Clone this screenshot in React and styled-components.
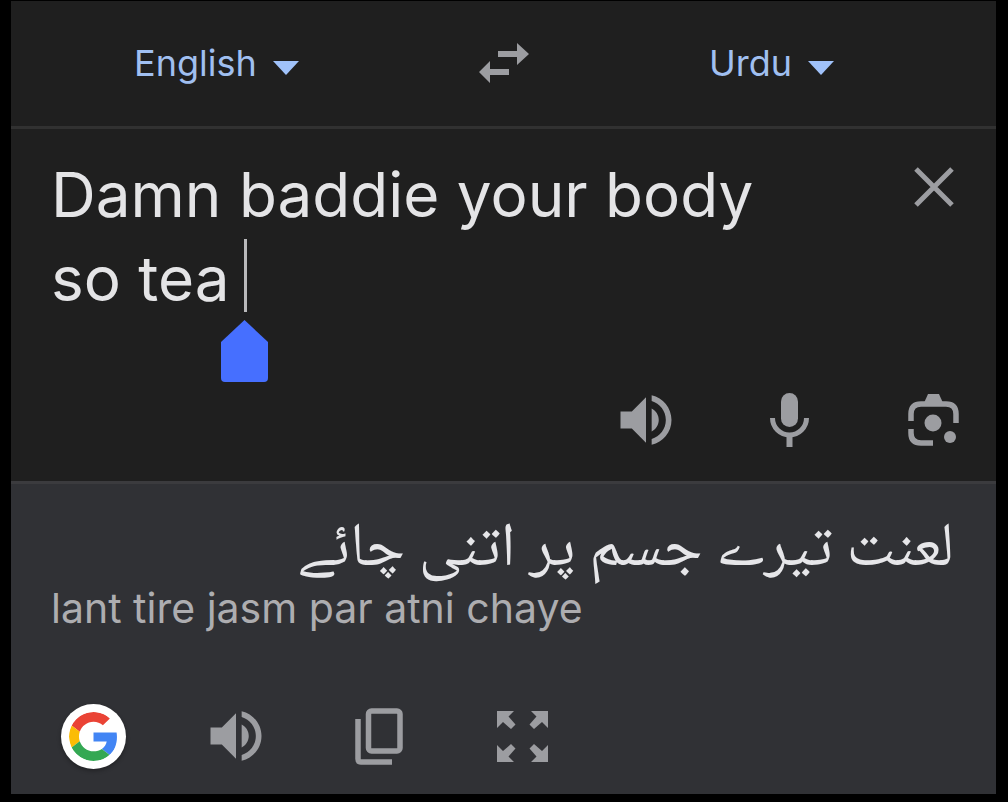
import { useState } from "react"
import styled, { createGlobalStyle } from "styled-components"

const GlobalStyle = createGlobalStyle`
  * {
    box-sizing: border-box;
  }

  body {
    margin: 0;
    background: #000;
    font-family: Inter, Roboto, sans-serif;
  }
`

const Page = styled.main`
  display: flex;
  min-height: 100vh;
  padding: 1px 12px 8px 11px;
`

const Panel = styled.div`
  display: flex;
  flex-direction: column;
  flex: 1;
  min-width: 0;
  background: #1f1f1f;
`

const LanguageBar = styled.header`
  display: flex;
  align-items: center;
  justify-content: space-between;
  height: 128px;
  padding: 0 162px 2px 123px;
  border-bottom: 3px solid #313131;
`

const Picker = styled.div`
  position: relative;
  display: flex;
  align-items: center;

  svg {
    position: absolute;
    right: 0;
    top: 22px;
    pointer-events: none;
  }
`

const LanguageSelect = styled.select`
  appearance: none;
  field-sizing: content;
  margin: 0;
  padding: 0 42px 0 0;
  border: 0;
  background: transparent;
  color: #a0bff0;
  font-family: Inter, sans-serif;
  font-size: 36px;
  line-height: 48px;
`

const IconButton = styled.button`
  display: flex;
  align-items: center;
  justify-content: center;
  flex: none;
  width: ${({ $size }) => $size || 68}px;
  height: ${({ $size }) => $size || 68}px;
  padding: 0;
  border: 0;
  background: transparent;
  color: #9c9da1;
  cursor: pointer;

  svg {
    flex: none;
  }
`

const Source = styled.section`
  display: flex;
  flex-direction: column;
  height: 352px;
  padding: 24px 28px 27px 40px;
`

const SourceRow = styled.div`
  display: flex;
  flex: 1;
  align-items: flex-start;
  justify-content: space-between;
`

const Editor = styled.div`
  position: relative;
  flex: 1;
  max-width: 760px;
`

const SourceText = styled.textarea`
  display: block;
  width: 100%;
  height: 168px;
  margin: 0;
  padding: 0;
  border: 0;
  outline: 0;
  resize: none;
  overflow: hidden;
  background: transparent;
  color: #e4e4e6;
  caret-color: transparent;
  font-family: Inter, sans-serif;
  font-size: 62px;
  line-height: 84px;
`

const Caret = styled.span`
  position: absolute;
  left: 193px;
  top: 86px;
  width: 3px;
  height: 73px;
  background: #b9b9bb;
`

const CaretHandle = styled.svg`
  position: absolute;
  left: 170px;
  top: 167px;
`

const Actions = styled.div`
  display: flex;
  justify-content: ${({ $align }) => $align || "flex-start"};
  gap: 76px;
`

const Result = styled.section`
  display: flex;
  flex-direction: column;
  justify-content: space-between;
  flex: 1;
  padding: 34px 42px 24px 40px;
  border-top: 3px solid #3b3b3e;
  background: #303135;
`

const Translation = styled.p`
  margin: 0;
  color: #e6e6e9;
  font-family: "Noto Naskh Arabic", "Noto Sans Arabic", "DejaVu Sans", sans-serif;
  font-size: 62px;
  line-height: 68px;
`

const Transliteration = styled.p`
  margin: 0;
  color: #adadb0;
  font-family: Inter, sans-serif;
  font-size: 41px;
  line-height: 44px;
`

const ResultActions = styled(Actions)`
  margin-left: 8px;
  gap: 75px;
`

const GoogleButton = styled(IconButton)`
  svg {
    padding: 8px;
    border-radius: 50%;
    background: #fff;
    box-shadow: 0 2px 4px rgba(0, 0, 0, 0.3);
  }
`

function ArrowDown() {
  return (
    <svg width="26" height="14" viewBox="0 0 26 14" fill="#a0c2fa">
      <path d="M0 0h26L13 14z" />
    </svg>
  )
}

function SwapIcon() {
  return (
    <svg width="50" height="40" viewBox="0 0 50 40" fill="currentColor">
      <path d="M19 8h19V0l12 11-12 11v-8H19zM30 26H11v-8L0 29l11 11v-8h19z" />
    </svg>
  )
}

function CloseIcon() {
  return (
    <svg width="40" height="40" viewBox="0 0 40 40" stroke="currentColor" strokeWidth="5">
      <path d="M2 2l36 36M38 2L2 38" />
    </svg>
  )
}

function SpeakerIcon() {
  return (
    <svg width="68" height="68" viewBox="0 0 24 24" fill="currentColor">
      <path d="M3 9v6h4l5 5V4L7 9H3zm13.5 3c0-1.77-1.02-3.29-2.5-4.03v8.05c1.48-.73 2.5-2.25 2.5-4.02zM14 3.23v2.06c2.89.86 5 3.54 5 6.71s-2.11 5.85-5 6.71v2.06c4.01-.91 7-4.49 7-8.77s-2.99-7.86-7-8.77z" />
    </svg>
  )
}

function MicIcon() {
  return (
    <svg width="40" height="54" viewBox="0 0 40 54" fill="none" stroke="currentColor" strokeWidth="5">
      <rect x="11" y="0" width="17" height="34" rx="8.5" fill="currentColor" stroke="none" />
      <path d="M2.500 25a17 17 0 0 0 34 0" />
      <path d="M19.500 42v12" strokeWidth="6" />
    </svg>
  )
}

function LensIcon() {
  return (
    <svg width="52" height="52" viewBox="0 0 52 52" fill="none" stroke="currentColor" strokeWidth="5.5">
      <path d="M3 27v-7q0-10 10-10h25q10 0 10 10v9M3 35v4q0 10 10 10h12" />
      <path d="M16 9l4-9h11l4 9z" fill="currentColor" stroke="none" />
      <circle cx="25" cy="29" r="8.500" fill="currentColor" stroke="none" />
      <circle cx="42" cy="43" r="6" fill="currentColor" stroke="none" />
    </svg>
  )
}

function CopyIcon() {
  return (
    <svg width="48" height="57" viewBox="0 0 48 57" fill="none" stroke="currentColor" strokeWidth="5.5">
      <rect x="13.500" y="3" width="31.500" height="40" rx="3" />
      <path d="M3 11v40q0 3 3 3h31" />
    </svg>
  )
}

function ExpandIcon() {
  return (
    <svg width="51" height="51" viewBox="0 0 51 51" fill="currentColor">
      <path d="M0 0h17l-5.500 5.500 7 8-4.500 4.500-8-7L0 17z" />
      <path d="M51 0H34l5.500 5.500-7 8L37 18l8-7 6 6z" />
      <path d="M0 51h17l-5.500-5.500 7-8L14 33l-8 7-6-6z" />
      <path d="M51 51H34l5.500-5.500-7-8L37 33l8 7 6-6z" />
    </svg>
  )
}

function GoogleIcon() {
  return (
    <svg width="65" height="65" viewBox="0 0 48 48">
      <path fill="#ea4335" d="M24 9.500c3.540 0 6.710 1.220 9.210 3.600l6.850-6.850C35.900 2.380 30.470 0 24 0 14.620 0 6.510 5.380 2.560 13.220l7.980 6.190C12.430 13.720 17.740 9.500 24 9.500z" />
      <path fill="#4285f4" d="M46.980 24.550c0-1.570-.15-3.090-.38-4.550H24v9.020h12.940c-.58 2.960-2.260 5.480-4.780 7.180l7.730 6c4.510-4.180 7.090-10.360 7.090-17.650z" />
      <path fill="#fbbc05" d="M10.530 28.590c-.48-1.450-.76-2.990-.76-4.590s.27-3.140.76-4.590l-7.980-6.190C.92 16.460 0 20.120 0 24s.92 7.540 2.560 10.780z" />
      <path fill="#34a853" d="M24 48c6.480 0 11.930-2.130 15.890-5.810l-7.730-6c-2.150 1.450-4.920 2.300-8.160 2.300-6.260 0-11.570-4.220-13.470-9.910l-7.980 6.190C6.510 42.620 14.620 48 24 48z" />
    </svg>
  )
}

function LanguagePicker({ label, value, onChange }) {
  return (
    <Picker>
      <LanguageSelect aria-label={label} value={value} onChange={(e) => onChange(e.target.value)}>
        <option>English</option>
        <option>Urdu</option>
      </LanguageSelect>
      <ArrowDown />
    </Picker>
  )
}

export default function App() {
  const [from, setFrom] = useState("English")
  const [to, setTo] = useState("Urdu")
  const [text, setText] = useState("Damn baddie your body so tea ")

  const swap = () => {
    setFrom(to)
    setTo(from)
  }

  return (
    <Page>
      <GlobalStyle />
      <Panel>
        <LanguageBar>
          <LanguagePicker label="Source language" value={from} onChange={setFrom} />
          <IconButton $size={50} aria-label="Swap languages" onClick={swap}>
            <SwapIcon />
          </IconButton>
          <LanguagePicker label="Target language" value={to} onChange={setTo} />
        </LanguageBar>

        <Source>
          <SourceRow>
            <Editor>
              <SourceText
                aria-label="Source text"
                spellCheck={false}
                value={text}
                onChange={(e) => setText(e.target.value)}
              />
              <Caret />
              <CaretHandle width="47" height="62" viewBox="0 0 47 62" fill="#466fff">
                <path d="M23.500 0L47 22v36q0 4-4 4H4q-4 0-4-4V22z" />
              </CaretHandle>
            </Editor>
            <IconButton aria-label="Clear text" onClick={() => setText("")}>
              <CloseIcon />
            </IconButton>
          </SourceRow>
          <Actions $align="flex-end">
            <IconButton aria-label="Listen to source">
              <SpeakerIcon />
            </IconButton>
            <IconButton aria-label="Voice input">
              <MicIcon />
            </IconButton>
            <IconButton aria-label="Camera input">
              <LensIcon />
            </IconButton>
          </Actions>
        </Source>

        <Result>
          <div>
            <Translation lang="ur" dir="rtl">لعنت تیرے جسم پر اتنی چائے</Translation>
            <Transliteration>lant tire jasm par atni chaye</Transliteration>
          </div>
          <ResultActions>
            <GoogleButton aria-label="Search with Google">
              <GoogleIcon />
            </GoogleButton>
            <IconButton aria-label="Listen to translation">
              <SpeakerIcon />
            </IconButton>
            <IconButton aria-label="Copy translation">
              <CopyIcon />
            </IconButton>
            <IconButton aria-label="Full screen">
              <ExpandIcon />
            </IconButton>
          </ResultActions>
        </Result>
      </Panel>
    </Page>
  )
}
